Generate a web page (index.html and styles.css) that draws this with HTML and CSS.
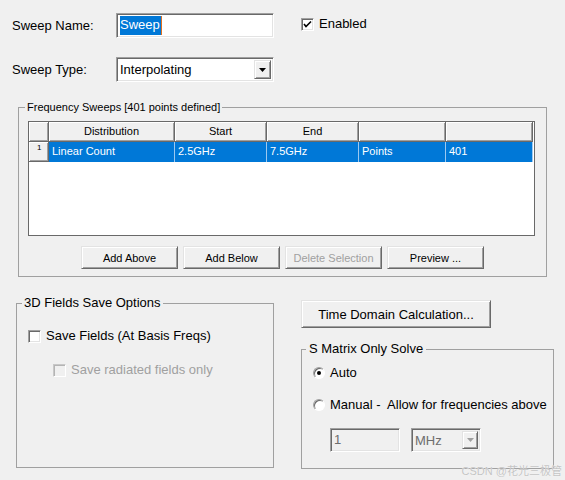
FILE: index.html
```html
<!DOCTYPE html>
<html lang="en">
<head>
    <meta charset="UTF-8">
    <title>Edit Frequency Sweep</title>
    <link rel="stylesheet" href="styles.css">
</head>
<body>
<div class="dialog">
    <div class="row name-row">
        <label class="lbl">Sweep Name:</label>
        <div class="textbox"><span class="selected">Sweep</span><span class="caret"></span></div>
        <label class="check enabled">
            <span class="box">
                <svg width="11" height="11" viewBox="0 0 11 11"><path d="M2 5 L4 7.5 L9 2.5" fill="none" stroke="#000" stroke-width="1.6"/></svg>
            </span>Enabled
        </label>
    </div>

    <div class="row type-row">
        <label class="lbl">Sweep Type:</label>
        <div class="combo">
            <span class="combo-text">Interpolating</span>
            <span class="combo-btn"><svg width="7" height="4" viewBox="0 0 7 4"><path d="M0 0 H7 L3.5 4 Z" fill="#000"/></svg></span>
        </div>
    </div>

    <fieldset class="group sweeps">
        <legend>Frequency Sweeps [401 points defined]</legend>
        <div class="grid">
            <div class="grid-row head">
                <div class="cell c0"></div>
                <div class="cell c1">Distribution</div>
                <div class="cell c2">Start</div>
                <div class="cell c3">End</div>
                <div class="cell c4"></div>
                <div class="cell c5"></div>
            </div>
            <div class="grid-row data">
                <div class="cell c0"><span class="rownum">1</span></div>
                <div class="cell c1">Linear Count</div>
                <div class="cell c2">2.5GHz</div>
                <div class="cell c3">7.5GHz</div>
                <div class="cell c4">Points</div>
                <div class="cell c5">401</div>
            </div>
        </div>
        <div class="btn-row">
            <button class="btn">Add Above</button>
            <button class="btn">Add Below</button>
            <button class="btn" disabled>Delete Selection</button>
            <button class="btn">Preview ...</button>
        </div>
    </fieldset>

    <div class="lower">
        <fieldset class="group save">
            <legend>3D Fields Save Options</legend>
            <label class="check save-fields"><span class="box"></span>Save Fields (At Basis Freqs)</label>
            <label class="check radiated off"><span class="box"></span>Save radiated fields only</label>
        </fieldset>

        <div class="right">
            <button class="btn wide">Time Domain Calculation...</button>
            <fieldset class="group smatrix">
                <legend>S Matrix Only Solve</legend>
                <label class="radio auto"><span class="dot on"></span>Auto</label>
                <label class="radio manual"><span class="dot"></span>Manual -&nbsp; Allow for frequencies above</label>
                <div class="freq-row">
                    <div class="textbox small off">1</div>
                    <div class="combo small off">
                        <span class="combo-text">MHz</span>
                        <span class="combo-btn"><svg width="7" height="4" viewBox="0 0 7 4"><path d="M0 0 H7 L3.5 4 Z" fill="#a0a0a0"/></svg></span>
                    </div>
                </div>
            </fieldset>
        </div>
    </div>

    <div class="watermark">CSDN @花光三极管</div>
</div>
</body>
</html>
```

FILE: styles.css
```css
body {
    margin: 0;
    background: #f0f0f0;
    font-family: "Liberation Sans", Arial, sans-serif;
    font-size: 13px;
    color: #000;
}
.dialog {
    position: relative;
    width: 565px;
    height: 480px;
    overflow: hidden;
}
.row {
    display: flex;
    align-items: center;
    height: 25px;
}
.name-row {
    padding-top: 13px;
}
.type-row {
    margin-top: 19px;
}
.lbl {
    width: 116px;
    padding-left: 12px;
    box-sizing: border-box;
}

/* sunken edit box */
.textbox, .combo {
    width: 158px;
    height: 25px;
    box-sizing: border-box;
    background: #fff;
    border: 1px solid;
    border-color: #a0a0a0 #fff #fff #a0a0a0;
    box-shadow: inset 1px 1px 0 #696969, inset -1px -1px 0 #e3e3e3;
    padding: 2px 0 0 3px;
    display: flex;
    align-items: center;
}
.textbox {
    align-items: stretch;
    padding: 2px 2px 2px 3px;
}
.selected {
    background: #0078d7;
    color: #fff;
    line-height: 18px;
    padding: 0 1px 0 0;
}
.caret {
    width: 1px;
    background: #e07020;
}
.combo {
    justify-content: space-between;
    padding: 2px 2px 2px 3px;
}
.combo-btn {
    width: 17px;
    height: 19px;
    box-sizing: border-box;
    background: #f0f0f0;
    border: 1px solid;
    border-color: #e3e3e3 #696969 #696969 #e3e3e3;
    box-shadow: inset 1px 1px 0 #fff, inset -1px -1px 0 #a0a0a0;
    display: flex;
    align-items: center;
    justify-content: center;
}

/* check boxes */
.check {
    display: flex;
    align-items: center;
    line-height: 16px;
}
.box {
    width: 13px;
    height: 13px;
    box-sizing: border-box;
    background: #fff;
    border: 1px solid;
    border-color: #a0a0a0 #fff #fff #a0a0a0;
    box-shadow: inset 1px 1px 0 #696969, inset -1px -1px 0 #e3e3e3;
    margin-right: 5px;
    display: flex;
    align-items: center;
    justify-content: center;
}
.enabled {
    margin-left: 27px;
    align-self: flex-start;
    margin-top: 3px;
}
.check.off {
    color: #a0a0a0;
}
.check.off .box {
    background: #f0f0f0;
    border-color: #c8c8c8 #fff #fff #c8c8c8;
    box-shadow: inset 1px 1px 0 #b4b4b4;
}

/* group boxes */
.group {
    margin: 0;
    min-width: 0;
    border: 1px solid #a0a0a0;
    box-sizing: border-box;
}
.group legend {
    padding: 0 2px;
    line-height: 16px;
}
.sweeps {
    margin: 18px 0 0 18px;
    width: 529px;
    padding: 7px 9px 7px 9px;
}
.sweeps legend {
    font-size: 11px;
    line-height: 14px;
    margin-left: -3px;
}

/* grid */
.grid {
    width: 507px;
    height: 115px;
    box-sizing: border-box;
    border: 1px solid #696969;
    background: #fff;
    font-size: 11px;
}
.grid-row {
    display: flex;
    height: 20px;
}
.cell {
    box-sizing: border-box;
    line-height: 19px;
    white-space: nowrap;
    overflow: hidden;
}
.c0 { width: 20px; }
.c1 { width: 126px; }
.c2 { width: 92px; }
.c3 { width: 92px; }
.c4 { width: 87px; }
.c5 { width: 87px; }
.head .cell {
    background: #f0f0f0;
    text-align: center;
    border-right: 1px solid #696969;
    border-bottom: 1px solid #696969;
    box-shadow: inset 1px 1px 0 #fff, inset -1px -1px 0 #a0a0a0;
}
.data .cell {
    background: #0078d7;
    color: #fff;
    padding-left: 3px;
    border-right: 1px solid #9cc8ef;
}
.data .c0 {
    background: #f0f0f0;
    border-right: 1px solid #696969;
    border-bottom: 1px solid #696969;
    box-shadow: inset 1px 1px 0 #fff, inset -1px -1px 0 #a0a0a0;
    padding-left: 8px;
    color: #000;
}
.rownum {
    font-size: 8px;
    line-height: 12px;
    vertical-align: top;
}

/* buttons */
.btn-row {
    display: flex;
    justify-content: center;
    gap: 5px;
    margin-top: 10px;
}
.btn {
    width: 97px;
    height: 23px;
    font-family: inherit;
    font-size: 11px;
    color: #000;
    background: #f0f0f0;
    border: 1px solid;
    border-color: #e3e3e3 #696969 #696969 #e3e3e3;
    box-shadow: inset 1px 1px 0 #fff, inset -1px -1px 0 #a0a0a0;
    padding: 0;
    border-radius: 0;
}
.btn:disabled {
    color: #a0a0a0;
}
.btn.wide {
    width: 190px;
    height: 28px;
    font-size: 13px;
    margin-top: 5px;
}

/* lower part */
.lower {
    display: flex;
    align-items: flex-start;
    margin-top: 18px;
}
.save {
    margin-left: 16px;
    width: 258px;
    height: 173px;
    padding: 0 11px;
}
.save legend {
    margin-left: -6px;
}
.save-fields {
    margin-top: 17px;
}
.radiated {
    margin-top: 18px;
    padding-left: 25px;
}
.right {
    margin-left: 27px;
    display: flex;
    flex-direction: column;
}
.smatrix {
    margin-top: 13px;
    width: 253px;
    height: 128px;
    padding: 0 11px;
}
.smatrix legend {
    margin-left: -7px;
    padding: 0 3px;
}
.radio {
    display: flex;
    align-items: center;
    line-height: 16px;
    white-space: nowrap;
}
.dot {
    flex: none;
    width: 12px;
    height: 12px;
    box-sizing: border-box;
    border-radius: 50%;
    background: #fff;
    border: 1px solid;
    border-color: #a0a0a0 #fff #fff #a0a0a0;
    box-shadow: inset 1px 1px 0 #696969;
    margin-right: 5px;
    display: flex;
    align-items: center;
    justify-content: center;
}
.dot.on::after {
    content: "";
    width: 4px;
    height: 4px;
    border-radius: 50%;
    background: #000;
}
.auto {
    margin-top: 8px;
}
.manual {
    margin-top: 16px;
}
.freq-row {
    display: flex;
    gap: 11px;
    margin-top: 15px;
    padding-left: 17px;
}
.small {
    width: 70px;
    height: 24px;
}
.textbox.off {
    background: #f0f0f0;
    color: #6d6d6d;
    align-items: center;
    padding-top: 0;
}
.combo.off {
    background: #f0f0f0;
    color: #6d6d6d;
}
.combo.small .combo-btn {
    width: 16px;
    height: 18px;
}

.watermark {
    position: absolute;
    right: 3px;
    top: 462px;
    font-family: "Liberation Sans", "Noto Sans CJK SC", sans-serif;
    font-size: 11px;
    color: #c4c4c4;
    text-shadow: 0 0 1px #fff;
}
```
